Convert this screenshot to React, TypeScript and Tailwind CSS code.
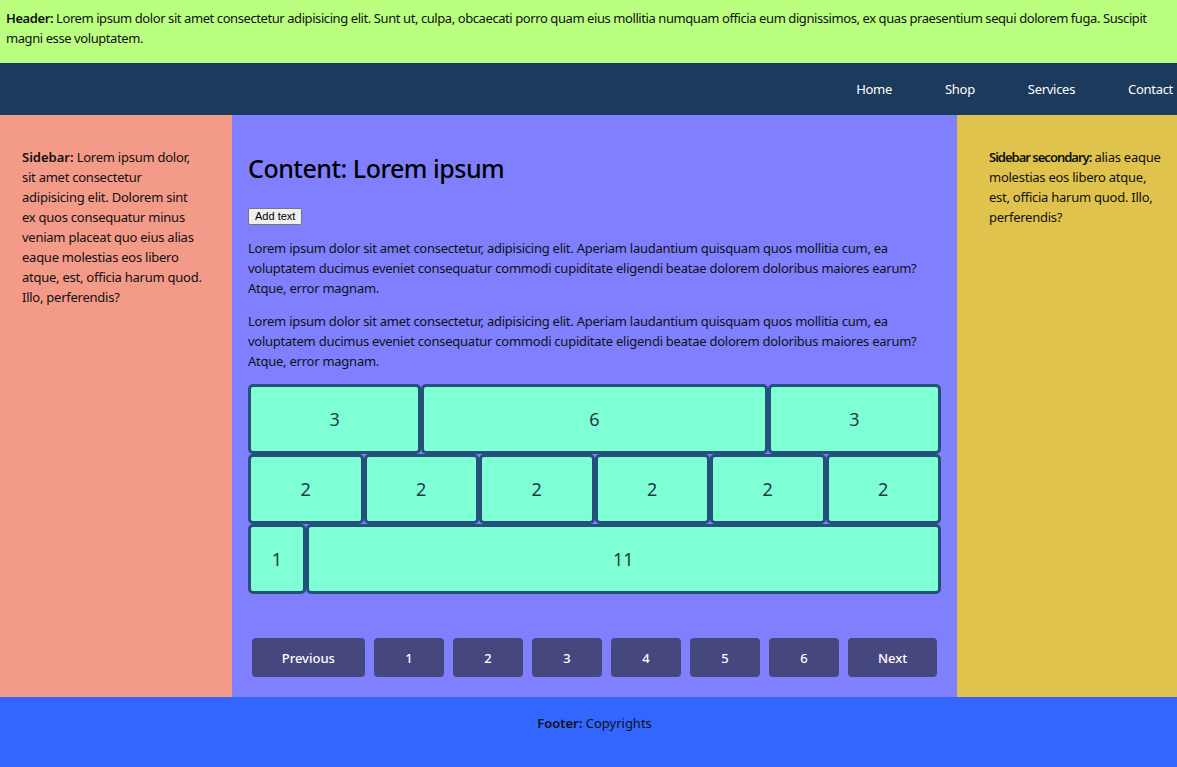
const rows = [[3, 6, 3], [2, 2, 2, 2, 2, 2], [1, 11]];

const spans: Record<number, string> = {
  1: "col-span-1",
  2: "col-span-2",
  3: "col-span-3",
  6: "col-span-6",
  11: "col-span-11",
};

const pages = ["Previous", "1", "2", "3", "4", "5", "6", "Next"];

export default function App() {
  return (
    <div className="w-full min-h-[767px] flex flex-col font-['Noto_Sans',sans-serif] text-[13px] leading-[20px] text-[#111]">
      {/* header */}
      <header className="bg-[#bbff80] pl-[6px] pr-4 pt-2 pb-[15px] tracking-[-0.42px]">
        <b className="font-semibold">Header:</b> Lorem ipsum dolor sit amet consectetur adipisicing elit. Sunt ut, culpa, obcaecati porro quam eius mollitia numquam officia eum dignissimos, ex quas praesentium sequi dolorem fuga. Suscipit magni esse voluptatem.
      </header>

      {/* nav */}
      <nav className="bg-[#1c3a5b] h-[52px] flex items-center justify-end gap-[53px] pr-[4px] text-white tracking-[-0.3px]">
        <a className="cursor-pointer">Home</a>
        <a className="cursor-pointer">Shop</a>
        <a className="cursor-pointer">Services</a>
        <a className="cursor-pointer">Contact</a>
      </nav>

      <div className="flex">
        <aside className="w-[232px] shrink-0 bg-[#f49a88] pl-[22px] pr-[28px] pt-8 tracking-[-0.25px]">
          <b className="font-semibold tracking-normal">Sidebar:</b> Lorem ipsum dolor, sit amet consectetur adipisicing elit. Dolorem sint ex quos consequatur minus veniam placeat quo eius alias eaque molestias eos libero atque, est, officia harum quod. Illo, perferendis?
        </aside>

        <main className="flex-1 bg-[#8080ff] px-4 pt-[38px] pb-5">
          <h2 className="text-[25px] leading-[30px] font-medium text-black mb-[25px] tracking-[-0.5px]">Content: Lorem ipsum</h2>
          <button className="block font-['Liberation_Sans',sans-serif] text-[11px] leading-[13px] px-[6px] py-[1px] bg-[#efefef] border border-[#767676] rounded-[2px] text-black mb-[13px]">
            Add text
          </button>
          <p className="mb-[13px] tracking-[-0.25px]">
            Lorem ipsum dolor sit amet consectetur, adipisicing elit. Aperiam laudantium quisquam quos mollitia cum, ea voluptatem ducimus eveniet consequatur commodi cupiditate eligendi beatae dolorem doloribus maiores earum? Atque, error magnam.
          </p>
          <p className="mb-[13px] tracking-[-0.25px]">
            Lorem ipsum dolor sit amet consectetur, adipisicing elit. Aperiam laudantium quisquam quos mollitia cum, ea voluptatem ducimus eveniet consequatur commodi cupiditate eligendi beatae dolorem doloribus maiores earum? Atque, error magnam.
          </p>

          <div className="grid grid-cols-12">
            {rows.flat().map((n, i) => (
              <div
                key={i}
                className={`${spans[n]} h-[70px] flex items-center justify-center bg-[#7fffd4] border-[3px] border-[#245179] rounded-[5px] text-[18px] text-[#1d3a4a]`}
              >
                {n}
              </div>
            ))}
          </div>

          <div className="flex justify-center gap-[9px] mt-[44px]">
            {pages.map((p) => (
              <button
                key={p}
                className={`h-[39px] rounded-[4px] bg-[#474780] text-white font-medium text-[13px] ${p.length > 1 ? "px-[30px]" : "w-[70px]"}`}
              >
                {p}
              </button>
            ))}
          </div>
        </main>

        <aside className="w-[220px] shrink-0 bg-[#dfc34d] pl-8 pr-[11px] pt-8 tracking-[-0.25px]">
          <b className="font-semibold tracking-[-1px]">Sidebar secondary:</b> alias eaque molestias eos libero atque, est, officia harum quod. Illo, perferendis?
        </aside>
      </div>

      <footer className="bg-[#3366ff] h-[70px] pt-4 pl-[12px] text-center">
        <b className="font-semibold">Footer:</b> Copyrights
      </footer>
    </div>
  );
}
